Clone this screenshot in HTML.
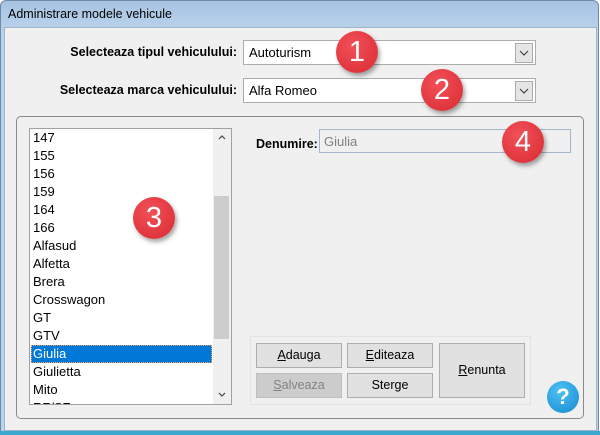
<!DOCTYPE html><html><head><style>
*{box-sizing:border-box;margin:0;padding:0}
body{width:600px;height:435px;background:#fff;font-family:"Liberation Sans",sans-serif;font-size:12px;position:relative;overflow:hidden}
.a{position:absolute}
.win{left:0;top:0;width:599px;height:434px;background:linear-gradient(#a7c3e2,#bad3ec 30px);border:1px solid #6e8aa8;border-radius:6px 6px 0 0}
.body{left:4px;top:27px;width:593px;height:404px;background:#f0f0f0;border:1px solid #9fb4c9}
.bot{left:0;top:431px;width:600px;height:4px;background:#3aa8cf}
.lbl{font-weight:bold;color:#000;text-align:right;font-size:12.5px}
.combo{background:#fff;border:1px solid #adadad;height:25px;padding:4px 5px;font-size:13px}
.dd{position:absolute;right:2px;top:2px;width:18px;height:20px;background:#e5e5e5;border:1px solid #acacac}
.grp{left:16px;top:116px;width:568px;height:303px;border:1px solid #8a8a8a;border-radius:5px}
.list{left:29px;top:128px;width:203px;height:277px;background:#fff;border:1px solid #a0a0a0;overflow:hidden}
.it{height:18px;line-height:18px;padding-left:3px;font-size:13px;color:#000}
.sel{background:#0078d7;color:#fff;outline:1px dotted #f0a060;outline-offset:-1px;width:181px;margin-left:1px;padding-left:2px}
.sb{left:183px;top:0;width:18px;height:275px;background:#f0f0f0}
.th{left:1px;top:67px;width:15px;height:143px;background:#cdcdcd}
.btn{background:#e1e1e1;border:1px solid #adadad;text-align:center;font-size:12.5px;color:#000}
.badge{width:42px;height:42px;border-radius:50%;background:radial-gradient(circle at 40% 35%,#f25058,#d92a32);color:#fff;font-size:29px;text-align:center;line-height:42px;box-shadow:2px 3px 4px rgba(0,0,0,.35)}
</style></head><body>
<div class="a win"></div>
<div class="a" style="left:8px;top:7px;font-size:12.5px;color:#000">Administrare modele vehicule</div>
<div class="a body"></div>
<div class="a bot"></div>
<div class="a lbl" style="left:20px;top:45px;width:217px">Selecteaza tipul vehiculului:</div>
<div class="a lbl" style="left:20px;top:83px;width:217px">Selecteaza marca vehiculului:</div>
<div class="a combo" style="left:243px;top:40px;width:293px">Autoturism<div class="dd"><svg width="16" height="18"><path d="M4 7l4 4 4-4" fill="none" stroke="#444" stroke-width="1.2"/></svg></div></div>
<div class="a combo" style="left:243px;top:78px;width:293px">Alfa Romeo<div class="dd"><svg width="16" height="18"><path d="M4 7l4 4 4-4" fill="none" stroke="#444" stroke-width="1.2"/></svg></div></div>
<div class="a grp"></div>
<div class="a list">
<div class="it">147</div><div class="it">155</div><div class="it">156</div><div class="it">159</div><div class="it">164</div><div class="it">166</div><div class="it">Alfasud</div><div class="it">Alfetta</div><div class="it">Brera</div><div class="it">Crosswagon</div><div class="it">GT</div><div class="it">GTV</div><div class="it sel">Giulia</div><div class="it">Giulietta</div><div class="it">Mito</div><div class="it">RZ/SZ</div>
<div class="a sb"><svg class="a" style="left:3px;top:4px" width="12" height="10"><path d="M3 6l3-3 3 3" fill="none" stroke="#444" stroke-width="1.2"/></svg><div class="a th"></div><svg class="a" style="left:3px;top:261px" width="12" height="10"><path d="M3 3l3 3 3-3" fill="none" stroke="#444" stroke-width="1.2"/></svg></div>
</div>
<div class="a lbl" style="left:256px;top:137px">Denumire:</div>
<div class="a" style="left:319px;top:129px;width:252px;height:24px;border:1px solid #a3b8cc;background:#f0f0f0;color:#808080;padding:4px 4px;font-size:13px">Giulia</div>
<div class="a" style="left:250px;top:336px;width:281px;height:69px;border:1px solid #e3e3e3"></div>
<div class="a btn" style="left:256px;top:343px;width:86px;height:25px;line-height:23px"><u>A</u>dauga</div>
<div class="a btn" style="left:347px;top:343px;width:86px;height:25px;line-height:23px"><u>E</u>diteaza</div>
<div class="a btn" style="left:256px;top:373px;width:86px;height:25px;line-height:23px;background:#cccccc;border-color:#bfbfbf;color:#838383"><u>S</u>alveaza</div>
<div class="a btn" style="left:347px;top:373px;width:86px;height:25px;line-height:23px">Ster<u>g</u>e</div>
<div class="a btn" style="left:439px;top:343px;width:86px;height:55px;line-height:53px"><u>R</u>enunta</div>
<div class="a" style="left:547px;top:381px;width:32px;height:32px;border-radius:50%;background:radial-gradient(circle at 40% 30%,#4ec2f2,#1588cf);color:#fff;font-weight:bold;font-size:22px;text-align:center;line-height:32px">?</div>
<div class="a badge" style="left:336px;top:31px">1</div>
<div class="a badge" style="left:421px;top:69px">2</div>
<div class="a badge" style="left:133px;top:197px">3</div>
<div class="a badge" style="left:502px;top:121px">4</div>
</body></html>
